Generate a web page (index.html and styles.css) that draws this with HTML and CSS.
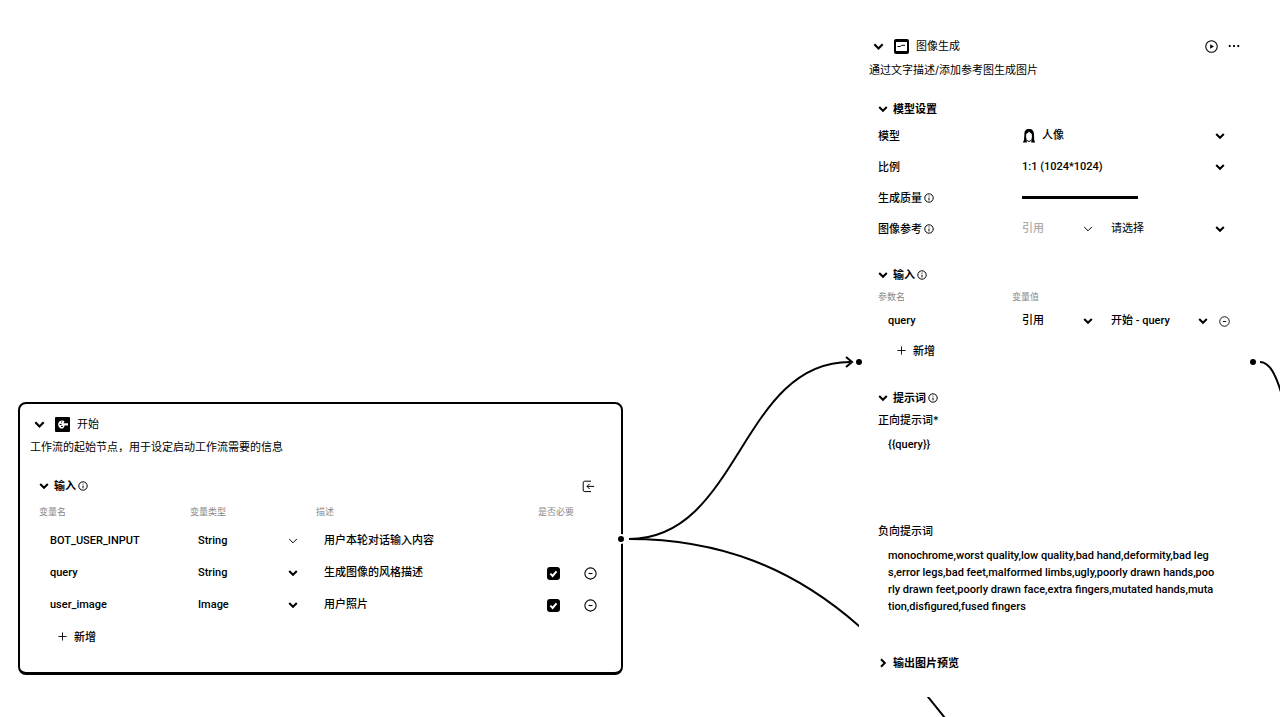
FILE: index.html
```html
<!DOCTYPE html>
<html lang="zh-CN">
<head>
<meta charset="utf-8">
<title>工作流</title>
<link rel="stylesheet" href="styles.css">
</head>
<body>
<svg class="symbols" aria-hidden="true">
  <symbol id="chevron" viewBox="0 0 10 10"><path d="M1.2 3 5 6.8 8.8 3"/></symbol>
  <symbol id="chevron-right" viewBox="0 0 10 10"><path d="M3 1.2 6.8 5 3 8.8"/></symbol>
  <symbol id="info" viewBox="0 0 10 10"><circle cx="5" cy="5" r="4.2"/><path d="M5 2.6v.9M5 4.6v2.8"/></symbol>
  <symbol id="minus" viewBox="0 0 12 12"><circle cx="6" cy="6" r="5.2"/><path d="M4.2 6h3.6"/></symbol>
  <symbol id="plus" viewBox="0 0 10 10"><path d="M5 .5v9M.5 5h9"/></symbol>
  <symbol id="tick" viewBox="0 0 13 13"><path d="m3.4 6.6 2.2 2.3 4-4.6"/></symbol>
</svg>
<main class="canvas">
  <svg class="edges" aria-hidden="true">
    <path d="M629 539C740 539 740 362 850 362"/>
    <path d="m846 357 6 5-6 5"/>
    <path d="M629 539C720 539 793 568 859 626C890 653 915 680 928 697L945 718"/>
    <path d="M1260 362C1270 362 1276 376 1281 392"/>
  </svg>

  <section class="node start">
    <header class="title">
      <button class="icon-btn" aria-label="收起"><svg class="chev large"><use href="#chevron"/></svg></button>
      <svg class="logo" viewBox="0 0 15 15"><rect width="15" height="15" rx="1" fill="#000"/><path d="M8 3.6A4 4 0 1 0 8 11.4L9.4 9.4V8.6H13V6.2H8.4L9.6 4.6Z" fill="#fff"/><path d="M4.6 7.4h2M6 5.4l1.2-.8M6 9.4h2" stroke="#000" fill="none"/></svg>
      <h2>开始</h2>
    </header>
    <p class="desc">工作流的起始节点，用于设定启动工作流需要的信息</p>
    <div class="section">
      <button class="icon-btn" aria-label="收起输入"><svg class="chev"><use href="#chevron"/></svg></button>
      <h3>输入</h3><svg class="info"><use href="#info"/></svg>
      <button class="icon-btn import" aria-label="导入"><svg viewBox="0 0 13 13"><path d="M9 1.2H2.8Q1.2 1.2 1.2 2.8V10Q1.2 11.6 2.8 11.6H9M12.2 6.4H5M7.6 3.8 5 6.4 7.6 9"/></svg></button>
    </div>
    <table class="params">
      <colgroup><col class="c-name"><col class="c-type"><col class="c-desc"><col class="c-req"><col></colgroup>
      <thead><tr><th>变量名</th><th>变量类型</th><th>描述</th><th>是否必要</th><td></td></tr></thead>
      <tbody>
        <tr>
          <td><input class="text" aria-label="变量名" value="BOT_USER_INPUT"></td>
          <td><span class="pick off"><select aria-label="变量类型"><option>String</option></select><svg class="chev"><use href="#chevron"/></svg></span></td>
          <td><input class="text" aria-label="描述" value="用户本轮对话输入内容"></td><td></td><td></td>
        </tr>
        <tr>
          <td><input class="text" aria-label="变量名" value="query"></td>
          <td><span class="pick"><select aria-label="变量类型"><option>String</option></select><svg class="chev"><use href="#chevron"/></svg></span></td>
          <td><input class="text" aria-label="描述" value="生成图像的风格描述"></td>
          <td><span class="check"><input type="checkbox" aria-label="是否必要" checked><svg><use href="#tick"/></svg></span></td>
          <td><button class="icon-btn" aria-label="删除"><svg class="minus"><use href="#minus"/></svg></button></td>
        </tr>
        <tr>
          <td><input class="text" aria-label="变量名" value="user_image"></td>
          <td><span class="pick"><select aria-label="变量类型"><option>Image</option></select><svg class="chev"><use href="#chevron"/></svg></span></td>
          <td><input class="text" aria-label="描述" value="用户照片"></td>
          <td><span class="check"><input type="checkbox" aria-label="是否必要" checked><svg><use href="#tick"/></svg></span></td>
          <td><button class="icon-btn" aria-label="删除"><svg class="minus"><use href="#minus"/></svg></button></td>
        </tr>
      </tbody>
    </table>
    <button class="add"><svg><use href="#plus"/></svg>新增</button>
    <span class="port out"></span>
  </section>

  <section class="node image">
    <header class="title">
      <button class="icon-btn" aria-label="收起"><svg class="chev large"><use href="#chevron"/></svg></button>
      <svg class="logo" viewBox="0 0 15 15"><rect x="1" y="1" width="13" height="13" rx="1" fill="#fff" stroke="#000" stroke-width="2"/><path d="M2 12.5h11M3.5 7.5h3l1-1.2h3.5" fill="none" stroke="#000"/><path d="M2 2.5h11" stroke="#000"/></svg>
      <h2>图像生成</h2>
      <button class="icon-btn run" aria-label="运行"><svg viewBox="0 0 12 12"><circle cx="6" cy="6" r="5.3"/><path d="M4.8 3.9v4.2L8.3 6Z" fill="#000" stroke="none"/></svg></button>
      <button class="icon-btn more" aria-label="更多"><svg viewBox="0 0 12 12"><path d="M.8 6h1.8M5.1 6h1.8M9.4 6h1.8" stroke-width="2"/></svg></button>
    </header>
    <p class="desc">通过文字描述/添加参考图生成图片</p>

    <div class="section model">
      <button class="icon-btn" aria-label="收起模型设置"><svg class="chev"><use href="#chevron"/></svg></button>
      <h3>模型设置</h3>
    </div>
    <div class="field">
      <label for="model">模型</label>
      <span class="pick portrait"><svg class="avatar" viewBox="0 0 14 16"><path d="M7 1C3.6 1 2.2 3 2.4 6.5L2 12 .8 14.6H5L4.6 11.6Q3.8 9 4.2 6 6 5.2 7 3.6 8.4 5.6 9.8 6 10.2 9 9.4 11.6L9.2 14.6H13.2L12.2 12 12 6.5C12 3 10.4 1 7 1Z" fill="#000"/><path d="M5 12.4 7 13.6 9 12.4" stroke="#000" fill="none"/></svg><select id="model"><option>人像</option></select><svg class="chev"><use href="#chevron"/></svg></span>
    </div>
    <div class="field">
      <label for="ratio">比例</label>
      <span class="pick"><select id="ratio"><option>1:1 (1024*1024)</option></select><svg class="chev"><use href="#chevron"/></svg></span>
    </div>
    <div class="field">
      <label for="quality">生成质量<svg class="info"><use href="#info"/></svg></label>
      <input class="slider" id="quality" type="range">
    </div>
    <div class="field split">
      <label for="reference">图像参考<svg class="info"><use href="#info"/></svg></label>
      <span class="pick faint"><select aria-label="参考方式"><option>引用</option></select><svg class="chev"><use href="#chevron"/></svg></span>
      <span class="pick empty"><select id="reference"><option>请选择</option></select><svg class="chev"><use href="#chevron"/></svg></span>
    </div>

    <div class="section inputs">
      <button class="icon-btn" aria-label="收起输入"><svg class="chev"><use href="#chevron"/></svg></button>
      <h3>输入</h3><svg class="info"><use href="#info"/></svg>
    </div>
    <div class="heads"><span>参数名</span><span>变量值</span></div>
    <div class="value">
      <input class="text" aria-label="参数名" value="query">
      <span class="pick"><select aria-label="取值方式"><option>引用</option></select><svg class="chev"><use href="#chevron"/></svg></span>
      <span class="pick"><select aria-label="变量值"><option>开始 - query</option></select><svg class="chev"><use href="#chevron"/></svg></span>
      <button class="icon-btn" aria-label="删除"><svg class="minus small"><use href="#minus"/></svg></button>
    </div>
    <button class="add"><svg><use href="#plus"/></svg>新增</button>

    <div class="section prompts">
      <button class="icon-btn" aria-label="收起提示词"><svg class="chev"><use href="#chevron"/></svg></button>
      <h3>提示词</h3><svg class="info"><use href="#info"/></svg>
    </div>
    <label class="caption" for="positive">正向提示词*</label>
    <textarea class="positive" id="positive">{{query}}</textarea>
    <label class="caption" for="negative">负向提示词</label>
    <textarea class="negative" id="negative">monochrome,worst quality,low quality,bad hand,deformity,bad leg
s,error legs,bad feet,malformed limbs,ugly,poorly drawn hands,poo
rly drawn feet,poorly drawn face,extra fingers,mutated hands,muta
tion,disfigured,fused fingers</textarea>

    <div class="section preview">
      <button class="icon-btn" aria-label="展开输出图片预览"><svg class="chev"><use href="#chevron-right"/></svg></button>
      <h3>输出图片预览</h3>
    </div>
    <span class="port in"></span>
    <span class="port out"></span>
  </section>
</main>
</body>
</html>
```
FILE: styles.css
```css
* { box-sizing: border-box; }
body {
  margin: 0;
  background: #fff;
  color: #000;
  font: 500 11px/16px Inter, "Noto Sans CJK SC", sans-serif;
}
h2, h3, p { margin: 0; font-size: inherit; }
h2, .desc { font-weight: 400; }
h3 { font-weight: 700; }
button, input, select, textarea {
  margin: 0;
  padding: 0;
  border: 0;
  background: none;
  color: inherit;
  font: inherit;
  appearance: none;
}
input, select, textarea { font-family: Roboto, "Noto Sans CJK SC", sans-serif; }
svg { flex: none; fill: none; stroke: #000; }
.symbols { position: absolute; width: 0; height: 0; }

.canvas { position: relative; min-height: 100vh; overflow: hidden; }
.edges { position: absolute; top: 0; left: 0; width: 100%; height: 100%; stroke-width: 2; }

.node { position: absolute; background: #fff; }
.start {
  left: 18px;
  top: 402px;
  width: 605px;
  padding: 8px 10px 20px;
  border: 2px solid #000;
  border-width: 2px 2px 3px;
  border-radius: 8px;
}
.image { left: 859px; top: 34px; width: 393px; padding: 0 10px 22px; }

.title { display: flex; align-items: center; height: 24px; padding-left: 4px; }
.title h2 { margin-left: 7px; }
.logo { width: 15px; height: 15px; margin-left: 10px; stroke: none; }
.desc { line-height: 24px; }
.start .desc { line-height: 22px; }
.icon-btn { display: flex; align-items: center; }
.chev { width: 10px; height: 10px; stroke-width: 2; }
.chev.large { width: 11px; height: 11px; }
.info { width: 10px; height: 10px; margin-left: 2px; }
.run { margin-left: auto; }
.run svg { width: 13px; height: 13px; }
.more { margin: 0 2px 0 10px; }
.more svg { width: 12px; height: 12px; }

.section { display: flex; align-items: center; height: 24px; margin-top: 16px; padding-left: 9px; }
.section h3 { margin-left: 5px; }
.import { margin-left: auto; margin-right: 16px; }
.import svg { width: 13px; height: 13px; }

.params { width: 100%; border-collapse: collapse; table-layout: fixed; }
.params th, .params td { padding: 0; text-align: left; }
.params th, .heads { color: #888; font-size: 9px; font-weight: 400; }
.params thead tr { height: 27px; }
.params tbody tr { height: 32px; }
.params th:first-child { padding-left: 9px; }
.params td:first-child { padding-left: 20px; }
.params tbody td:nth-child(2) { padding-left: 8px; }
.params tbody td:nth-child(3) { padding-left: 8px; }
.params tbody td:nth-child(4) { padding-left: 9px; }
.c-name { width: 160px; }
.c-type { width: 126px; }
.c-desc { width: 222px; }
.c-req { width: 46px; }
.text { display: block; width: 100%; height: 16px; }

.pick { display: flex; align-items: center; }
.pick select { flex: 1; min-width: 0; height: 16px; }
.params .pick { margin-right: 18px; }
.off .chev { stroke-width: 1; }
.empty { font-weight: 400; }
.faint select { color: #aaa; }
.faint .chev { stroke-width: 1; }

.check { display: grid; width: 13px; height: 13px; }
.check input, .check svg { grid-area: 1 / 1; width: 13px; height: 13px; }
.check input { border-radius: 3px; background: #000; }
.check svg { stroke: #fff; stroke-width: 2; pointer-events: none; }
.minus { width: 13px; height: 13px; }
.minus.small { width: 11px; height: 11px; }

.add { display: flex; align-items: center; gap: 7px; height: 31px; margin-left: 28px; }
.add svg { width: 9px; height: 9px; }

.field {
  display: grid;
  grid-template-columns: 144px 1fr;
  align-items: center;
  height: 31px;
  padding: 0 17px 0 9px;
}
.split { grid-template-columns: 144px 71px 1fr; }
.split .pick + .pick { margin-left: 18px; }
.field label { display: flex; align-items: center; }
.avatar { width: 14px; height: 16px; margin-right: 6px; stroke: none; }
.slider { width: 116px; height: 3px; background: #000; }
.slider::-webkit-slider-thumb { appearance: none; width: 3px; height: 3px; background: #000; }

.model { height: 23px; margin-top: 15px; }
.inputs { margin-top: 19px; }
.heads { display: grid; grid-template-columns: 134px 1fr; align-items: center; height: 20px; padding-left: 9px; }
.value {
  display: grid;
  grid-template-columns: 134px 71px 97px 1fr;
  align-items: center;
  height: 28px;
  padding-left: 19px;
}
.value .pick + .pick { margin-left: 18px; margin-right: -18px; }
.value .icon-btn { margin-left: 29px; }

.prompts { margin-top: 20px; }
.caption { display: block; padding-left: 9px; line-height: 20px; }
textarea {
  display: block;
  width: 100%;
  padding: 6px 10px 6px 19px;
  line-height: 17px;
  word-break: break-all;
  resize: none;
  overflow: hidden;
}
.positive { height: 91px; }
.negative { height: 94px; }

.port { position: absolute; width: 6px; height: 6px; border-radius: 50%; background: #000; }
.start .out { right: -3px; top: 132px; box-shadow: 0 0 0 2px #fff; }
.image .in { left: -3px; top: 325px; }
.image .out { right: -4px; top: 325px; }
```
